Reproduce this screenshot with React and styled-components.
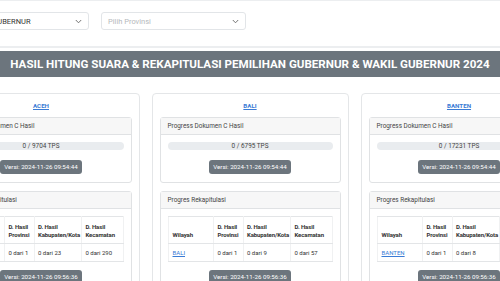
import React from 'react';
import styled, { createGlobalStyle } from 'styled-components';

const GlobalStyle = createGlobalStyle`
	html, body {
		margin: 0;
		padding: 0;
		background: #fff;
		overflow: hidden;
		font-family: Roboto, 'Liberation Sans', sans-serif;
		color: #333;
	}
	* {
		box-sizing: border-box;
	}
`;

const provinces = [
	{
		name: 'ACEH',
		tps: 9704,
		versi: '2024-11-26 09:54:44',
		rekap: { prov: 1, kab: 23, kec: 290 },
		rekapVersi: '2024-11-26 09:56:36',
	},
	{
		name: 'BALI',
		tps: 6795,
		versi: '2024-11-26 09:54:44',
		rekap: { prov: 1, kab: 9, kec: 57 },
		rekapVersi: '2024-11-26 09:56:36',
	},
	{
		name: 'BANTEN',
		tps: 17231,
		versi: '2024-11-26 09:54:44',
		rekap: { prov: 1, kab: 8, kec: 155 },
		rekapVersi: '2024-11-26 09:56:36',
	},
];

const Chevron = () => (
	<svg width='7' height='5' viewBox='0 0 7 5'>
		<polyline points='0.8,1 3.5,3.8 6.2,1' fill='none' stroke='#666' strokeWidth='0.9' />
	</svg>
);

function ProvinceCard({ item }) {
	return (
		<Card>
			<CardTitle href='#'>{item.name}</CardTitle>
			<Panel>
				<PanelHeader>Progress Dokumen C Hasil</PanelHeader>
				<PanelBody>
					<Progress>0 / {item.tps} TPS</Progress>
					<Badge>Versi: {item.versi}</Badge>
				</PanelBody>
			</Panel>
			<Panel $gap>
				<PanelHeader>Progres Rekapitulasi</PanelHeader>
				<PanelBody>
					<Table>
						<colgroup>
							<col style={{ width: '28%' }} />
							<col style={{ width: '18%' }} />
							<col style={{ width: '29%' }} />
							<col style={{ width: '25%' }} />
						</colgroup>
						<thead>
							<tr>
								<th>Wilayah</th>
								<th>D. Hasil Provinsi</th>
								<th>D. Hasil Kabupaten/Kota</th>
								<th>D. Hasil Kecamatan</th>
							</tr>
						</thead>
						<tbody>
							<tr>
								<td>
									<CellLink href='#'>{item.name}</CellLink>
								</td>
								<td>0 dari {item.rekap.prov}</td>
								<td>0 dari {item.rekap.kab}</td>
								<td>0 dari {item.rekap.kec}</td>
							</tr>
						</tbody>
					</Table>
					<Badge $tight>Versi: {item.rekapVersi}</Badge>
				</PanelBody>
			</Panel>
		</Card>
	);
}

export default function App() {
	return (
		<Page>
			<GlobalStyle />
			<TopBar>
				<Select $shift>
					<span>PEMILIHAN GUBERNUR</span>
					<Chevron />
				</Select>
				<Select $placeholder>
					<span>Pilih Provinsi</span>
					<Chevron />
				</Select>
			</TopBar>
			<Banner>HASIL HITUNG SUARA &amp; REKAPITULASI PEMILIHAN GUBERNUR &amp; WAKIL GUBERNUR 2024</Banner>
			<CardRow>
				{provinces.map((item) => (
					<ProvinceCard key={item.name} item={item} />
				))}
			</CardRow>
		</Page>
	);
}

const Page = styled.div`
	width: 500px;
	height: 281px;
	overflow: hidden;
`;

const TopBar = styled.div`
	height: 48px;
	display: flex;
	align-items: flex-start;
	gap: 12px;
	padding-top: 11px;
	border-top: 1px solid #eceef0;
	border-bottom: 2px solid #eceef0;
`;

const Select = styled.div`
	width: 145px;
	height: 18px;
	flex-shrink: 0;
	margin-left: ${(p) => (p.$shift ? '-56px' : '0')};
	display: flex;
	align-items: center;
	justify-content: space-between;
	padding: 0 6px 0 6px;
	border: 1px solid #e2e5e8;
	border-radius: 3px;
	font-size: 7.5px;
	color: ${(p) => (p.$placeholder ? '#b5b8bb' : '#333')};
	white-space: nowrap;
`;

const Banner = styled.div`
	margin-top: 3px;
	height: 26px;
	background: #6c757d;
	color: #fff;
	font-size: 11.6px;
	font-weight: 700;
	display: flex;
	align-items: center;
	justify-content: center;
	white-space: nowrap;
`;

const CardRow = styled.div`
	margin-top: 16px;
	display: flex;
	justify-content: center;
	gap: 12px;
`;

const Card = styled.div`
	width: 197px;
	flex-shrink: 0;
	border: 1px solid #e4e6e8;
	border-radius: 4px;
	padding: 0 7px 8px;
	display: flex;
	flex-direction: column;
`;

const CardTitle = styled.a`
	height: 23px;
	display: flex;
	align-items: center;
	justify-content: center;
	align-self: center;
	font-size: 6.2px;
	font-weight: 700;
	color: #3a7bd5;
	text-decoration: underline;
`;

const Panel = styled.div`
	margin-top: ${(p) => (p.$gap ? '8px' : '0')};
	border: 1px solid #e0e2e4;
	border-radius: 3px;
`;

const PanelHeader = styled.div`
	height: 17px;
	display: flex;
	align-items: center;
	padding: 0 7px;
	background: #f7f7f7;
	border-bottom: 1px solid #e0e2e4;
	font-size: 6.4px;
	color: #444;
`;

const PanelBody = styled.div`
	padding: 7px 7px 8px;
	display: flex;
	flex-direction: column;
	align-items: center;
`;

const Progress = styled.div`
	align-self: stretch;
	height: 8px;
	border-radius: 4px;
	background: #e9ecef;
	font-size: 6.4px;
	line-height: 8px;
	text-align: center;
	color: #444;
`;

const Badge = styled.div`
	margin-top: ${(p) => (p.$tight ? '8px' : '10px')};
	height: 14px;
	padding: 0 4px;
	display: flex;
	align-items: center;
	border-radius: 3px;
	background: #6c757d;
	color: #fff;
	font-size: 6.2px;
	white-space: nowrap;
`;

const Table = styled.table`
	width: 100%;
	table-layout: fixed;
	border-collapse: collapse;
	font-size: 6px;
	color: #333;
	th,
	td {
		border-top: 1px solid #e3e5e7;
		border-bottom: 1px solid #e3e5e7;
		border-left: 1px solid #f0f1f2;
		border-right: 1px solid #f0f1f2;
		padding: 4.5px 2px 4.5px 3px;
		text-align: left;
		line-height: 7.5px;
	}
	th {
		padding-top: 6px;
		padding-bottom: 5px;
		font-weight: 700;
		letter-spacing: -0.1px;
		vertical-align: bottom;
	}
	th:first-child,
	td:first-child {
		padding-left: 4px;
	}
	td {
		white-space: nowrap;
	}
`;

const CellLink = styled.a`
	color: #3a7bd5;
	text-decoration: underline;
`;
